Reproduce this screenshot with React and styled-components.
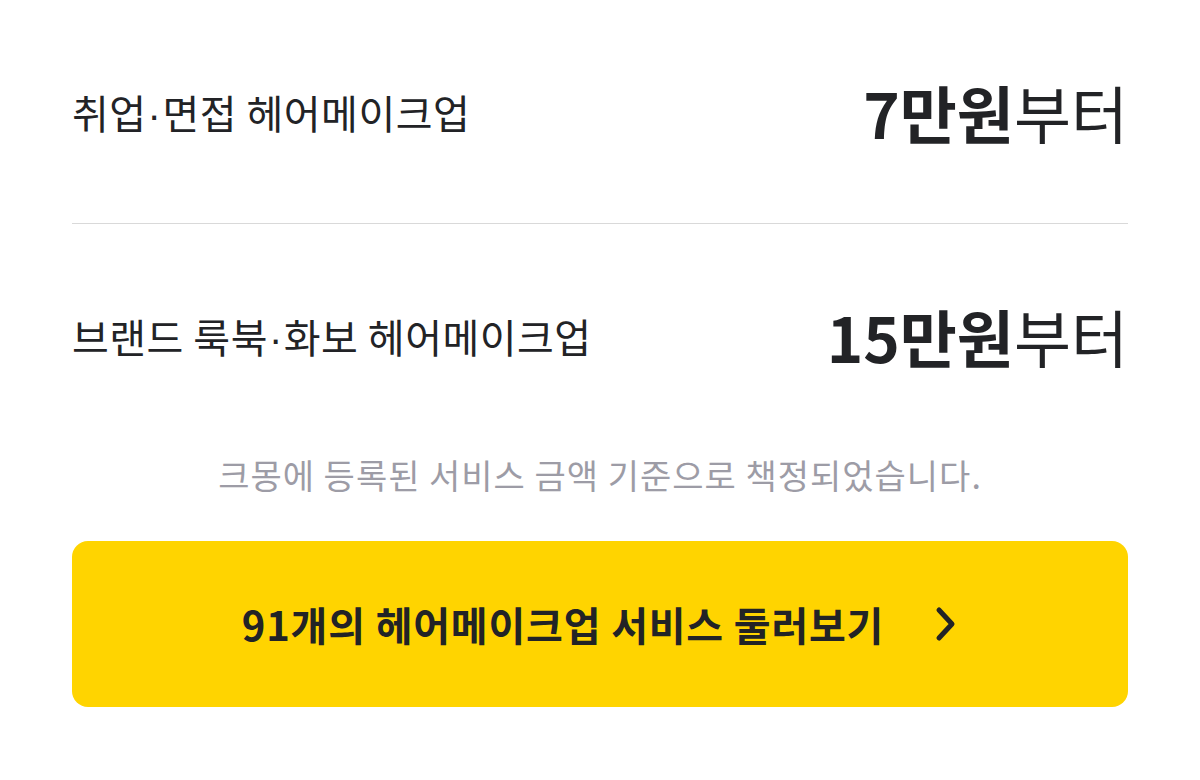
import React from 'react';
import styled, { createGlobalStyle } from 'styled-components';

const GlobalStyle = createGlobalStyle`
  body {
    margin: 0;
    background: #fff;
    font-family: 'Noto Sans CJK KR', 'Noto Sans', sans-serif;
    color: #222326;
  }
`;

const prices = [
  { id: 1, title: ['취업', '면접 헤어메이크업'], amount: '7만원' },
  { id: 2, title: ['브랜드 룩북', '화보 헤어메이크업'], amount: '15만원' },
];

function App() {
  return (
    <>
      <GlobalStyle />
      <StyledPriceBox>
        <ul>
          {prices.map(({ id, title, amount }) => (
            <Row key={id}>
              <p className="title">
                {title[0]}
                <Dot>·</Dot>
                {title[1]}
              </p>
              <p className="price">
                <strong>{amount}</strong>부터
              </p>
            </Row>
          ))}
        </ul>
        <Note>크몽에 등록된 서비스 금액 기준으로 책정되었습니다.</Note>
        <MoreButton type="button">
          91개의 헤어메이크업 서비스 둘러보기
          <svg width="24" height="36" viewBox="0 0 24 36" fill="none">
            <path d="M5 4l13 14L5 32" stroke="#222326" strokeWidth="5" strokeLinecap="round" strokeLinejoin="round" />
          </svg>
        </MoreButton>
      </StyledPriceBox>
    </>
  );
}

export default App;

const StyledPriceBox = styled.div`
  padding: 0 72px;
  ul {
    margin: 0;
    padding: 0;
    list-style: none;
  }
`;

const Row = styled.li`
  display: flex;
  align-items: center;
  justify-content: space-between;
  height: 223px;
  & + & {
    border-top: 1px solid #d9d9d9;
  }
  p {
    margin: 0;
  }
  .title {
    font-size: 40px;
    letter-spacing: 0.5px;
  }
  .price {
    font-size: 62px;
  }
  strong {
    font-weight: 700;
  }
`;

const Dot = styled.span`
  font-family: 'Liberation Sans', sans-serif;
  margin: 0 1px;
`;

const Note = styled.p`
  margin: 6px 0 0;
  text-align: center;
  font-size: 34px;
  line-height: 44px;
  letter-spacing: 1px;
  color: #9d9ca6;
`;

const MoreButton = styled.button`
  display: flex;
  align-items: center;
  justify-content: center;
  gap: 50px;
  width: 100%;
  height: 166px;
  margin-top: 44px;
  border: none;
  border-radius: 16px;
  background: #ffd400;
  color: #222326;
  font-family: inherit;
  font-size: 40px;
  font-weight: 700;
  letter-spacing: 0.8px;
`;
